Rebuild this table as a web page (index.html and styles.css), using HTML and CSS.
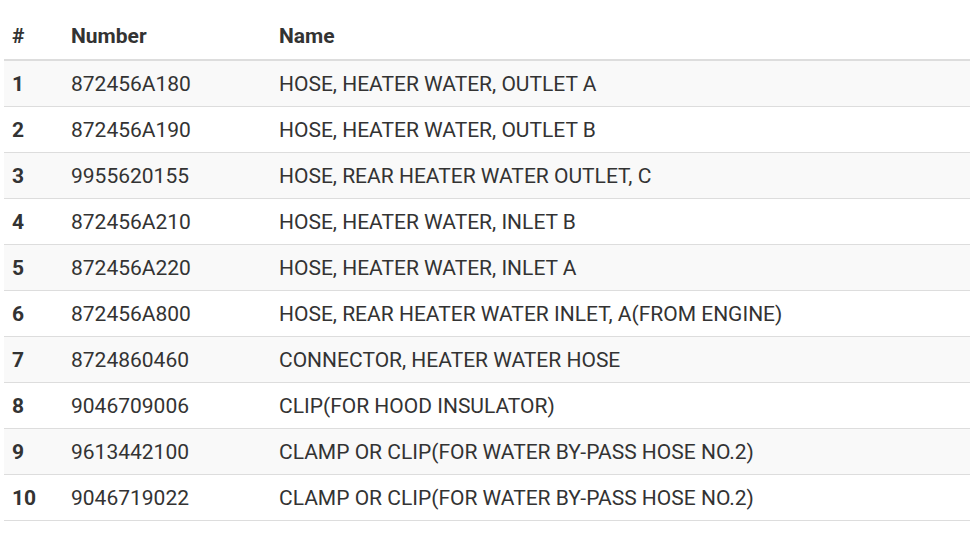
FILE: index.html
```html
<!DOCTYPE html>
<html>
<head>
<meta charset="utf-8">
<link rel="stylesheet" href="styles.css">
</head>
<body>
<div class="wrap">
<table class="parts">
<thead>
<tr><th class="c-idx">#</th><th class="c-num">Number</th><th>Name</th></tr>
</thead>
<tbody>
<tr><td class="c-idx">1</td><td>872456A180</td><td>HOSE, HEATER WATER, OUTLET A</td></tr>
<tr><td class="c-idx">2</td><td>872456A190</td><td>HOSE, HEATER WATER, OUTLET B</td></tr>
<tr><td class="c-idx">3</td><td>9955620155</td><td>HOSE, REAR HEATER WATER OUTLET, C</td></tr>
<tr><td class="c-idx">4</td><td>872456A210</td><td>HOSE, HEATER WATER, INLET B</td></tr>
<tr><td class="c-idx">5</td><td>872456A220</td><td>HOSE, HEATER WATER, INLET A</td></tr>
<tr><td class="c-idx">6</td><td>872456A800</td><td>HOSE, REAR HEATER WATER INLET, A(FROM ENGINE)</td></tr>
<tr><td class="c-idx">7</td><td>8724860460</td><td>CONNECTOR, HEATER WATER HOSE</td></tr>
<tr><td class="c-idx">8</td><td>9046709006</td><td>CLIP(FOR HOOD INSULATOR)</td></tr>
<tr><td class="c-idx">9</td><td>9613442100</td><td>CLAMP OR CLIP(FOR WATER BY-PASS HOSE NO.2)</td></tr>
<tr><td class="c-idx">10</td><td>9046719022</td><td>CLAMP OR CLIP(FOR WATER BY-PASS HOSE NO.2)</td></tr>
</tbody>
</table>
</div>
</body>
</html>
```
FILE: styles.css
```css
html, body {
  margin: 0;
  padding: 0;
  background: #fff;
}
.wrap {
  padding: 12px 0 0 4px;
}
.parts {
  width: 966px;
  border-collapse: collapse;
  font-family: Roboto, "Liberation Sans", sans-serif;
  font-size: 21px;
  color: #333;
}
.parts th, .parts td {
  text-align: left;
  padding: 0 8px;
  vertical-align: middle;
}
.parts th {
  height: 47px;
  font-weight: 700;
  border-bottom: 2px solid #ddd;
}
.parts td {
  height: 45px;
  border-bottom: 1px solid #ddd;
}
.parts tbody tr:nth-child(odd) td {
  background: #f9f9f9;
}
.c-idx {
  width: 43px;
  font-weight: 700;
}
.c-num {
  width: 192px;
}
```
